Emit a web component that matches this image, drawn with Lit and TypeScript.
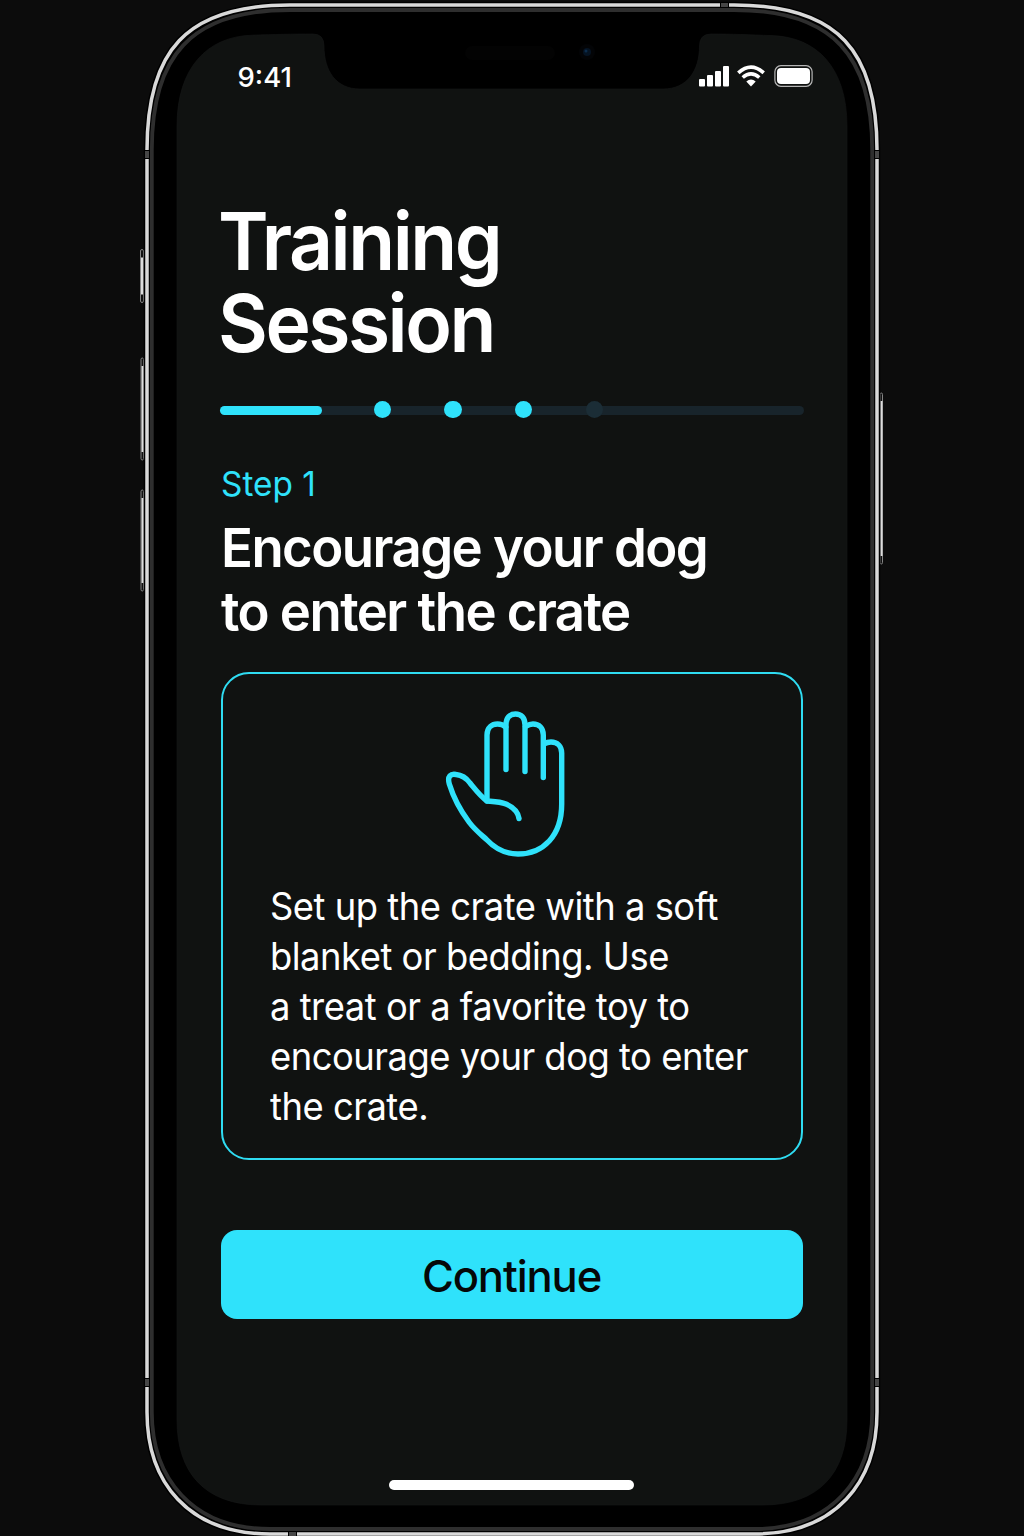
import { LitElement, html, svg, css } from "lit";
import { customElement, property } from "lit/decorators.js";

@customElement("device-frame")
class DeviceFrame extends LitElement {
  static styles = css`
    :host { display: block; width: 1024px; height: 1536px; }
    .frame { display: block; }
  `;

  private button(x: number, y: number, h: number, w = 3) {
    return svg`
      <rect x=${x} y=${y} width=${w} height=${h} rx="1.5" fill="#111" stroke="#858585" stroke-width="1"/>
      <rect x=${x + 0.5} y=${y + 8} width="2" height=${h - 16} fill="#dcdcdc"/>`;
  }

  render() {
    const ring =
      "M147 150 C147 52 185 5 290 5 H734 C839 5 877 52 877 150 V1412 C877 1482 836 1534 754 1534 H270 C188 1534 147 1482 147 1412 Z";
    const inner =
      "M151.800 150 C151.800 57 190 10 290 10 H734 C834 10 872.200 57 872.200 150 V1412 C872.200 1478 832 1529 754 1529 H270 C192 1529 151.800 1478 151.800 1412 Z";
    const screen =
      "M177 126 C177 68 207 36.5 252 35.2 C275 34.4 292 34 313 34 Q324 34 324 46 C324 71 336 89 360 89 H663 C687 89 699.500 71 699.500 46 Q699.500 34 711 34 C732 34 749 34.800 772 35.600 C817 37 847 68 847 126 V1420 C847 1474 818 1505 763 1505 H261 C206 1505 177 1474 177 1420 Z";
    return html`
      <svg class="frame" width="1024" height="1536" viewBox="0 0 1024 1536" aria-hidden="true">
        ${this.button(140.5, 249.5, 53)}
        ${this.button(141, 358, 102, 2.5)}
        ${this.button(141, 490, 101, 2.5)}
        ${this.button(880, 393, 171, 2.5)}
        <path d=${ring} fill="#000" stroke="#000" stroke-width="6.500"/>
        <path d=${inner} fill="#000" stroke="#2e2e2e" stroke-width="3.800"/>
        <path d=${ring} fill="none" stroke="#000" stroke-width="5"/>
        <path d=${ring} fill="none" stroke="#d9d9d9" stroke-width="3.500"/>
        <g fill="#464646" stroke="#000" stroke-width="1">
          <rect x="144.500" y="150.500" width="5" height="8"/>
          <rect x="874.500" y="150.500" width="5" height="8"/>
          <rect x="144.500" y="1378.500" width="5" height="8"/>
          <rect x="874.500" y="1378.500" width="5" height="8"/>
          <rect x="720.500" y="2.500" width="8" height="5"/>
          <rect x="288.500" y="1531.500" width="8" height="5"/>
        </g>
        <path d=${screen} fill="#101211" stroke="#161817" stroke-width="0.600"/>
        <rect x="465" y="46" width="90" height="14" rx="7" fill="#030303"/>
        <circle cx="587" cy="52" r="8" fill="#030406"/>
        <circle cx="587" cy="52" r="4" fill="#051322"/>
        <circle cx="586" cy="51" r="1.500" fill="#0b2c4c"/>
      </svg>
    `;
  }
}

@customElement("status-bar")
class StatusBar extends LitElement {
  static styles = css`
    :host { display: flex; justify-content: space-between; align-items: center; height: 24px; color: #fff; }
    .time { font-size: 27.5px; font-weight: 500; line-height: 24px; letter-spacing: 0; padding: 1px 0 0 0.5px; }
    .icons { display: block; }
  `;
  render() {
    return html`
      <span class="time">9:41</span>
      <svg class="icons" width="116" height="24" viewBox="698 64 116 24" aria-hidden="true">
        <g fill="#fff">
          <rect x="699" y="79" width="6" height="7.500" rx="1"/>
          <rect x="707" y="75" width="6" height="11.500" rx="1"/>
          <rect x="715" y="71" width="6" height="15.500" rx="1"/>
          <rect x="723" y="66" width="6" height="20.500" rx="1"/>
          <path d="M746.300 81.600 Q751 77.400 755.700 81.600 L751 86.500 Z"/>
          <rect x="777" y="68" width="33" height="16" rx="4"/>
        </g>
        <path d="M738.300 72.900 Q751 61.300 763.700 72.900 M742.700 77.500 Q751 70.300 759.300 77.500" fill="none" stroke="#fff" stroke-width="3.600"/>
        <rect x="774.900" y="65.700" width="37.200" height="20.600" rx="6" fill="none" stroke="#b5b5b5" stroke-width="1.200"/>
      </svg>
    `;
  }
}

@customElement("session-progress")
class SessionProgress extends LitElement {
  @property({ type: Number }) value = 17.5;
  static styles = css`
    :host { display: block; height: 18px; }
    .bar { display: grid; align-items: center; height: 18px; }
    .bar > * { grid-area: 1 / 1; }
    .track { height: 9px; border-radius: 5px; background: #18242b; margin-top: 1px; }
    .fill { height: 9px; border-radius: 5px; background: #2fe2fb; margin-top: 1px; }
    .dots { display: flex; gap: 53.4px; padding-left: 153.8px; margin-top: -1px; }
    .dot { width: 17.2px; height: 17.2px; border-radius: 50%; background: #2fe2fb; }
    .pending { background: #1b2d36; }
  `;
  render() {
    return html`
      <div class="bar">
        <div class="track"></div>
        <div class="fill" style="width:${this.value}%"></div>
        <div class="dots">
          ${[true, true, true, false].map((on) => html`<span class="dot ${on ? "" : "pending"}"></span>`)}
        </div>
      </div>
    `;
  }
}

@customElement("step-card")
class StepCard extends LitElement {
  static styles = css`
    :host { display: block; box-sizing: border-box; height: 488px; border: 2px solid #2fdcf2; border-radius: 28px; padding: 35px 0 0 46px; }
    .hand { display: block; margin-left: 174.5px; }
    .text { margin: 23px 0 0 0.5px; color: #fff; font-size: 37.5px; line-height: 50px; letter-spacing: -0.5px; font-weight: 400; white-space: nowrap; transform: scaleX(0.97); transform-origin: left; }
  `;
  render() {
    return html`
      <svg class="hand" width="124" height="150" viewBox="443 709 124 150" fill="none" stroke="#2fe2fb" stroke-width="5.400" stroke-linecap="round" stroke-linejoin="round" aria-hidden="true">
        <path d="M486 801 V735 C486 727.500 491 724 496.500 724 C500 724 502.500 725 504.700 727"/>
        <path d="M505 769.500 V725 C505 717.500 509 714 514.500 714 C520 714 524 717.500 524 725 V771.500"/>
        <path d="M524.500 726.500 C527 725 529 724 532 724 C538 724 542.300 728 542.300 735 V777.500"/>
        <path d="M543 744 C545.500 742.500 547.500 742 550 742 C556 742 560.700 746 560.700 753 V804 C560.700 836 542 854 517 854 C504 854 493.500 848 485.500 839.500 C480 834.500 474 830 468 822 C459 810 452 796 448.300 784 C446 776 450 773.500 455 774.500 C461 775 465 777.500 469 783 C474 789 479 796 486 801 C493 801.500 499 801.500 505 804 C512 807 517 811.500 518 818.500"/>
      </svg>
      <p class="text">Set up the crate with a soft<br>blanket or bedding. Use<br>a treat or a favorite toy to<br>encourage your dog to enter<br>the crate.</p>
    `;
  }
}

@customElement("app-root")
class AppRoot extends LitElement {
  static styles = css`
    :host { display: block; }
    .stage { display: grid; width: 1024px; height: 1536px; overflow: hidden; background: #0c0c0c; font-family: Inter, "Liberation Sans", sans-serif; }
    .stage > * { grid-area: 1 / 1; }
    .screen { display: flex; flex-direction: column; box-sizing: border-box; width: 670px; margin: 34px 0 0 177px; z-index: 1; }
    .status { margin: 30px 33px 0 60px; }
    .content { display: flex; flex-direction: column; padding: 0 44px; }
    .title { margin: 112px 0 0 -3.500px; font-size: 80px; font-weight: 600; line-height: 82px; letter-spacing: -2.6px; color: #fff; transform: scaleX(0.959); transform-origin: left; }
    .progress { margin: 37px -1px 0; }
    .step { margin-top: 45px; color: #2fe2fb; font-size: 34px; line-height: 40px; transform: scaleX(0.98); transform-origin: left; }
    .heading { margin: 12px 0 0; color: #fff; font-size: 54px; line-height: 64px; font-weight: 600; letter-spacing: -1.6px; white-space: nowrap; transform: scaleX(0.977); transform-origin: left; }
    .card { margin: 28px 0 0; }
    .continue { margin: 69.5px 0 0; height: 89px; border: 0; border-radius: 16px; background: #2fe2fb; color: #050808; font: 500 43.5px/86px Inter, "Liberation Sans", sans-serif; letter-spacing: -1.1px; padding: 3px 1px 0 0; }
    .home { align-self: center; width: 245px; height: 10px; margin: 161px 1px 0 0; border-radius: 5px; background: #fff; }
  `;
  render() {
    return html`
      <main class="stage">
        <device-frame></device-frame>
        <section class="screen">
          <status-bar class="status"></status-bar>
          <div class="content">
            <h1 class="title">Training<br>Session</h1>
            <session-progress class="progress"></session-progress>
            <div class="step">Step 1</div>
            <h2 class="heading">Encourage your dog<br>to enter the crate</h2>
            <step-card class="card"></step-card>
            <button class="continue">Continue</button>
          </div>
          <div class="home"></div>
        </section>
      </main>
    `;
  }
}
